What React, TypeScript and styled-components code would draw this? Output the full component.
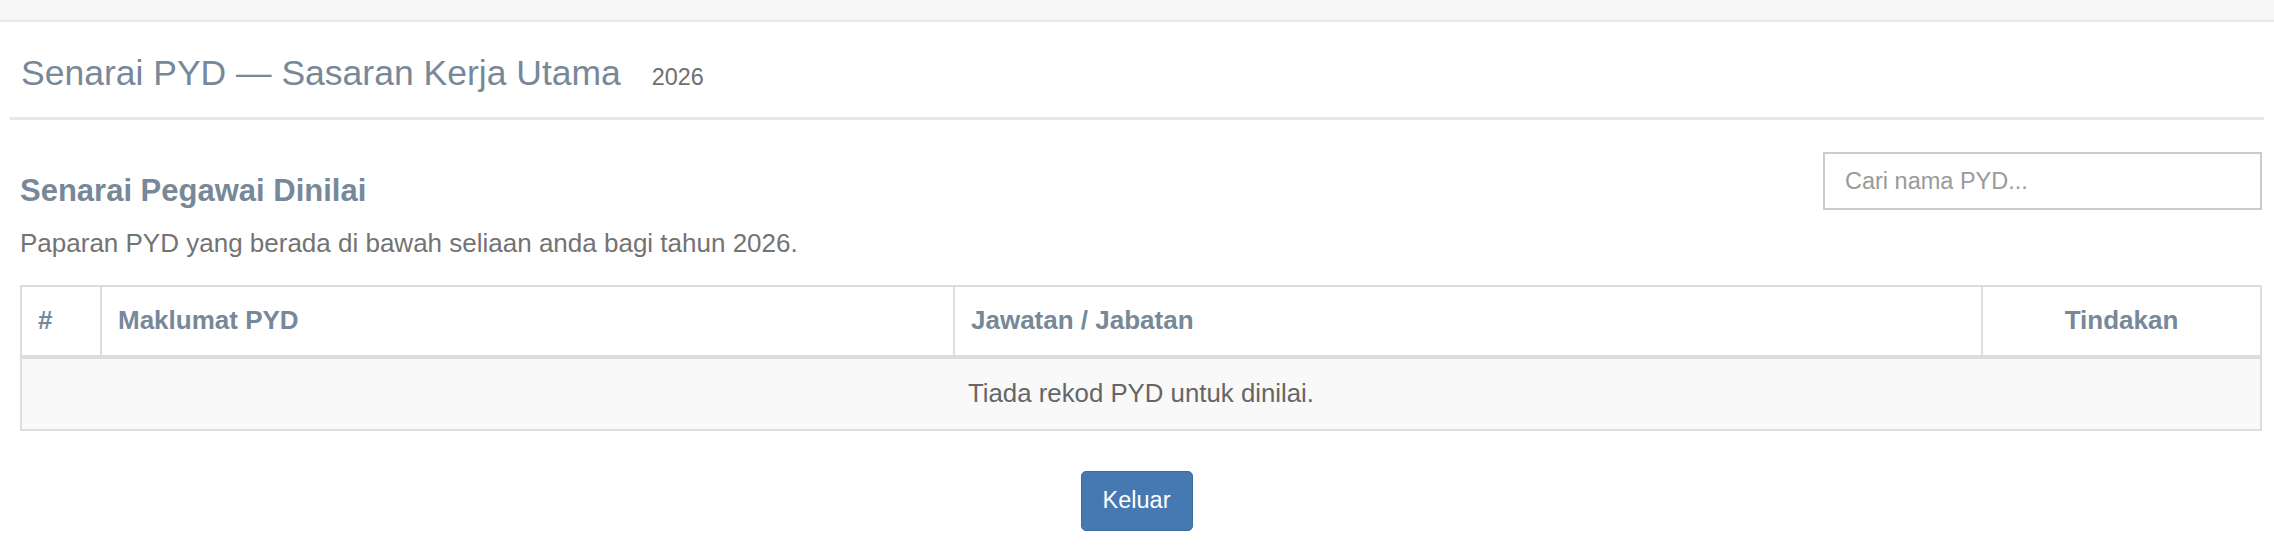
import React from "react";
import styled, { createGlobalStyle } from "styled-components";

const GlobalStyle = createGlobalStyle`
  html, body {
    margin: 0;
    padding: 0;
    background: #ffffff;
    font-family: "Liberation Sans", Arial, Helvetica, sans-serif;
  }
  * { box-sizing: border-box; }
`;

const TopBar = styled.div`
  height: 22px;
  background: #f6f6f6;
  border-bottom: 2px solid #e7e7ea;
`;

const PageHeader = styled.div`
  margin: 32px 10px 0;
  padding: 0 11px 24px;
  border-bottom: 3px solid #e8e8eb;
`;

const Title = styled.h1`
  margin: 0;
  font-size: 35.5px;
  line-height: 1.1;
  font-weight: 400;
  color: #778899;
  display: flex;
  align-items: baseline;
`;

const Year = styled.small`
  font-size: 23.4px;
  color: #6f6f6f;
  margin-left: 31px;
`;

const Content = styled.div`
  padding: 32px 12px 0 20px;
`;

const Toolbar = styled.div`
  display: flex;
  justify-content: space-between;
  align-items: flex-start;
`;

const SectionHeading = styled.h3`
  margin: 22px 0 0;
  font-size: 31px;
  line-height: 33px;
  font-weight: 700;
  color: #778899;
`;

const SearchInput = styled.input`
  width: 439px;
  height: 58px;
  padding: 0 20px;
  border: 2px solid #cccccc;
  border-radius: 0;
  font-family: inherit;
  font-size: 23.5px;
  color: #555;
  outline: none;
  &::placeholder {
    color: #9a9a9a;
  }
`;

const Description = styled.p`
  margin: 16px 0 0;
  font-size: 26px;
  line-height: 35.7px;
  color: #737373;
`;

const Table = styled.table`
  width: 2242px;
  margin-top: 23px;
  border-collapse: collapse;
  border: 2px solid #dddddd;
  table-layout: fixed;
`;

const HeadCell = styled.th<{ $align?: string; $width?: number }>`
  ${(p) => (p.$width ? `width: ${p.$width}px;` : "")}
  height: 71px;
  padding: 0 16px;
  border: 2px solid #dddddd;
  border-bottom: 4px solid #dddddd;
  text-align: ${(p) => p.$align || "left"};
  vertical-align: middle;
  font-size: 26px;
  font-weight: 700;
  color: #778899;
`;

const EmptyCell = styled.td`
  height: 73px;
  background: #f9f9f9;
  border: 2px solid #dddddd;
  text-align: center;
  vertical-align: middle;
  font-size: 25.8px;
  color: #666666;
`;

const Actions = styled.div`
  display: flex;
  justify-content: center;
  margin-top: 40px;
  padding-right: 9px;
`;

const Button = styled.button`
  width: 112px;
  height: 60px;
  background: #4679b1;
  border: 1px solid #3b6ca3;
  border-radius: 5px;
  color: #ffffff;
  font-family: inherit;
  font-size: 23.5px;
  cursor: pointer;
`;

export default function App() {
  return (
    <>
      <GlobalStyle />
      <TopBar />
      <PageHeader>
        <Title>
          Senarai PYD — Sasaran Kerja Utama
          <Year>2026</Year>
        </Title>
      </PageHeader>
      <Content>
        <Toolbar>
          <SectionHeading>Senarai Pegawai Dinilai</SectionHeading>
          <SearchInput type="text" placeholder="Cari nama PYD..." />
        </Toolbar>
        <Description>
          Paparan PYD yang berada di bawah seliaan anda bagi tahun 2026.
        </Description>
        <Table>
          <thead>
            <tr>
              <HeadCell $width={80}>#</HeadCell>
              <HeadCell $width={853}>Maklumat PYD</HeadCell>
              <HeadCell $width={1028}>Jawatan / Jabatan</HeadCell>
              <HeadCell $align="center">Tindakan</HeadCell>
            </tr>
          </thead>
          <tbody>
            <tr>
              <EmptyCell colSpan={4}>Tiada rekod PYD untuk dinilai.</EmptyCell>
            </tr>
          </tbody>
        </Table>
        <Actions>
          <Button type="button">Keluar</Button>
        </Actions>
      </Content>
    </>
  );
}
